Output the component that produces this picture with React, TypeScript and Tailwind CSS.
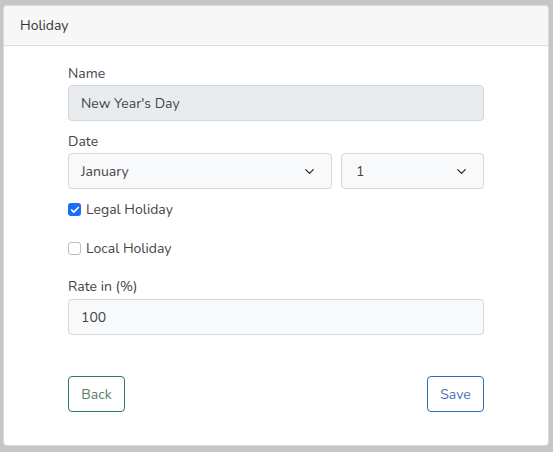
import { ChevronDown, Check } from "lucide-react";

const font = { fontFamily: '"Nunito", "Noto Sans", "Liberation Sans", sans-serif' };

function Select({ value, className }: { value: string; className: string }) {
  return (
    <div className={`flex h-[36px] items-center justify-between rounded-[4px] border border-[#d3d6da] bg-[#f8f9fa] pl-[12px] pr-[14px] text-[14px] text-[#444] ${className}`}>
      <span>{value}</span>
      <ChevronDown className="h-[15px] w-[15px] text-[#333]" strokeWidth={2.2} />
    </div>
  );
}

function CheckRow({ label, checked }: { label: string; checked?: boolean }) {
  return (
    <label className="flex h-[21px] items-center gap-[5px] text-[14px] text-[#444]">
      {checked ? (
        <span className="flex h-[13px] w-[13px] items-center justify-center rounded-[3px] bg-[#1a6ef5]">
          <Check className="h-[10px] w-[10px] text-white" strokeWidth={4} />
        </span>
      ) : (
        <span className="h-[13px] w-[13px] rounded-[3px] border border-[#b9bdc2] bg-white" />
      )}
      {label}
    </label>
  );
}

export default function App() {
  return (
    <div className="h-[452px] w-[553px] bg-[#c6c6c6] pl-[3px] pr-[4px] pt-[5px] pb-[6px]" style={font}>
      <div className="flex h-full flex-col overflow-hidden rounded-[4px] border border-[#dcdcdc] bg-white">
        <div className="flex h-[40px] shrink-0 items-center border-b border-[#dcdcdc] bg-[#f7f7f7] px-[16px] text-[14px] text-[#333]">
          Holiday
        </div>
        <div className="ml-[64px] w-[416px] pt-[17px]">
          <div className="leading-[21px] text-[14px] text-[#444]">Name</div>
          <div className="mt-[1px] flex h-[36px] items-center rounded-[4px] border border-[#d3d6da] bg-[#e9ecef] px-[12px] text-[14px] text-[#444]">
            New Year's Day
          </div>

          <div className="mt-[10px] leading-[21px] text-[14px] text-[#444]">Date</div>
          <div className="mt-[1px] flex gap-[9px]">
            <Select value="January" className="w-[264px]" />
            <Select value="1" className="flex-1 pl-[14px]" />
          </div>

          <div className="mt-[10px]">
            <CheckRow label="Legal Holiday" checked />
          </div>
          <div className="mt-[18px]">
            <CheckRow label="Local Holiday" />
          </div>

          <div className="mt-[17px] leading-[21px] text-[14px] text-[#444]">Rate in (%)</div>
          <div className="mt-[2px] flex h-[36px] items-center rounded-[4px] border border-[#d3d6da] bg-[#f8f9fa] px-[12px] text-[14px] text-[#444]">
            100
          </div>

          <div className="mt-[41px] flex justify-between">
            <button className="h-[36px] w-[57px] rounded-[4px] border border-[#2b7a5a] text-[14px] text-[#557d68]">
              Back
            </button>
            <button className="h-[36px] w-[57px] rounded-[4px] border border-[#2d6cc0] text-[14px] text-[#4a70c2]">
              Save
            </button>
          </div>
        </div>
      </div>
    </div>
  );
}
